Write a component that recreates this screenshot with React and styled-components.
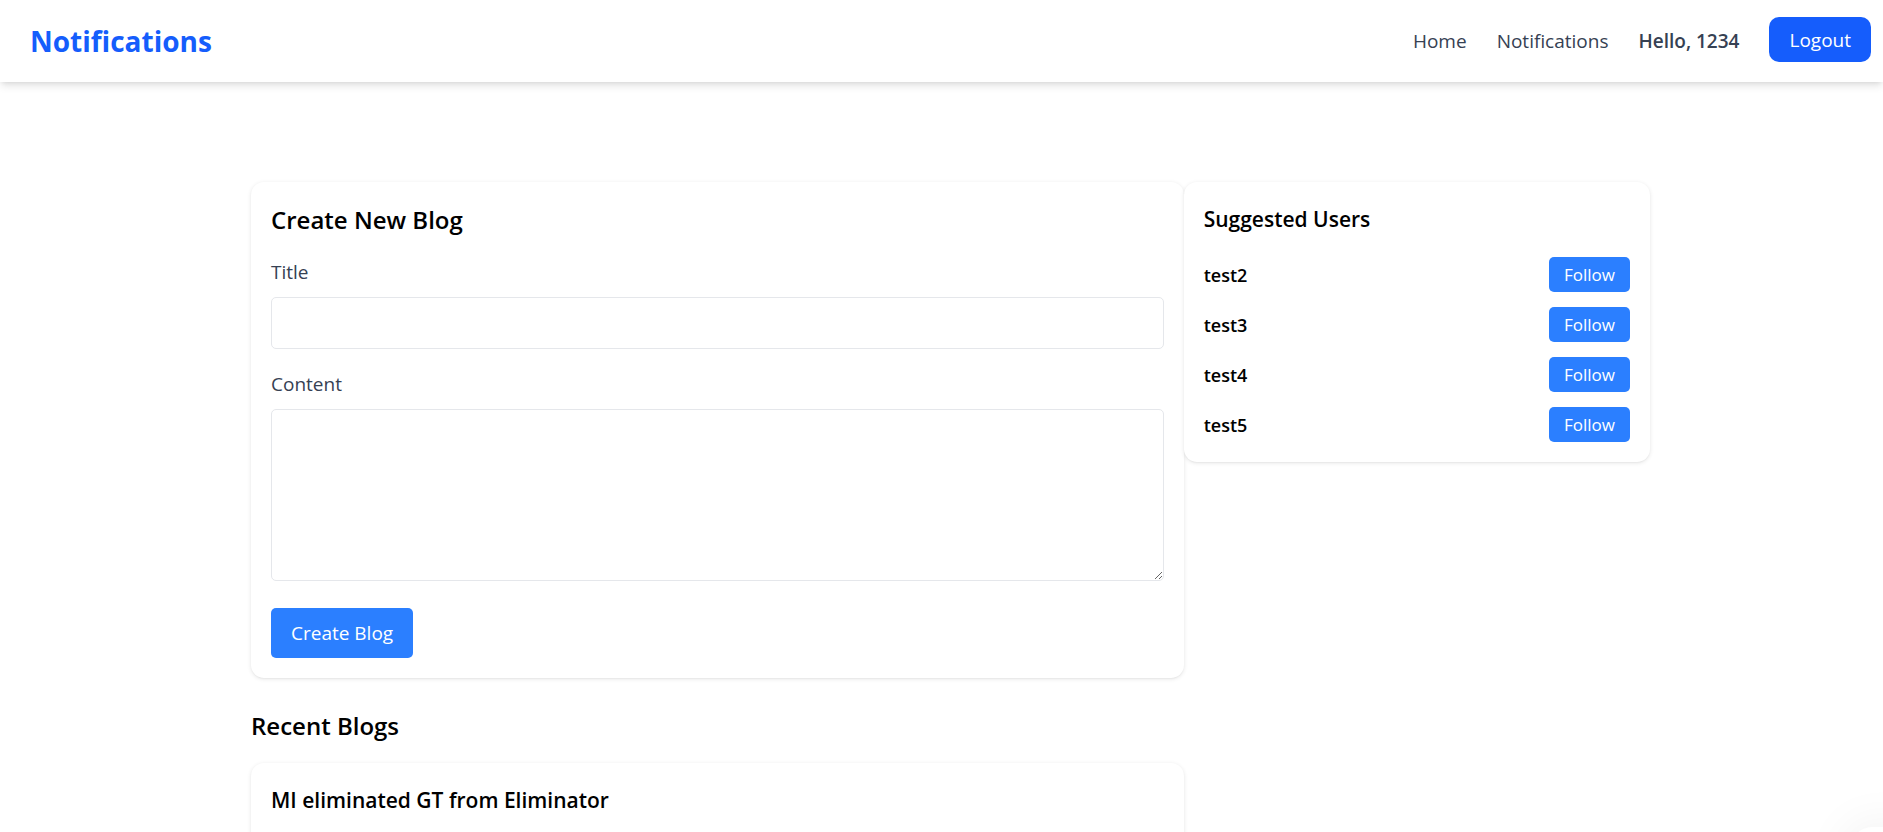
import React from "react";
import styled, { createGlobalStyle } from "styled-components";

const GlobalStyle = createGlobalStyle`
  *, *::before, *::after { box-sizing: border-box; margin: 0; }
  html { scrollbar-width: none; }
  body {
    background: #fff;
    color: #000;
    font-family: "Segoe UI", "Open Sans", "Noto Sans", sans-serif;
    font-size: 19px;
    line-height: 30px;
  }
  button, input, textarea { font: inherit; }
`;

const Header = styled.header`
  position: relative;
  display: flex;
  align-items: center;
  justify-content: space-between;
  height: 82px;
  padding: 0 12px 0 30px;
  background: #fff;
  box-shadow: 0 5px 8px -1px rgba(0, 0, 0, 0.1), 0 2px 5px -2px rgba(0, 0, 0, 0.1);
`;

const Brand = styled.a`
  color: #155dfc;
  font-size: 28px;
  font-weight: 700;
  line-height: 40px;
  text-decoration: none;
`;

const Nav = styled.nav`
  display: flex;
  align-items: center;
  gap: 30px;
  color: #364153;
`;

const NavLink = styled.a`
  color: inherit;
  text-decoration: none;
`;

const Greeting = styled.span`
  font-weight: 600;
`;

const Button = styled.button`
  display: block;
  flex: none;
  border: 0;
  border-radius: 5px;
  padding: 10px 20px;
  background: #2b7fff;
  color: #fff;
  cursor: pointer;
`;

const LogoutButton = styled(Button)`
  margin-bottom: 4px;
  border-radius: 10px;
  padding: 8px 20px 7px;
  background: #155dfc;
`;

const FollowButton = styled(Button)`
  padding: 5px 15px;
  font-size: 17px;
  line-height: 25px;
`;

const PageWrap = styled.div`
  padding: 100px 0 40px 18px;
`;

const Page = styled.main`
  display: grid;
  grid-template-columns: 2fr 1fr;
  align-items: start;
  width: 100%;
  max-width: 1399px;
  margin: 0 auto;
`;

const Feed = styled.div`
  display: flex;
  flex-direction: column;
  gap: 30px;
  min-width: 0;
`;

const Card = styled.section`
  padding: 20px;
  border-radius: 13px;
  background: #fff;
  box-shadow: 0 1px 4px rgba(0, 0, 0, 0.1), 0 1px 2px -1px rgba(0, 0, 0, 0.1);
`;

const Heading = styled.h2`
  margin-bottom: 20px;
  font-size: ${({ $small }) => ($small ? "21px" : "24px")};
  font-weight: 600;
  line-height: 35px;
`;

const Field = styled.div`
  margin-bottom: ${({ $last }) => ($last ? "27px" : "20px")};
`;

const Label = styled.label`
  display: block;
  margin-bottom: 10px;
  color: #364153;
`;

const TextInput = styled.input`
  display: block;
  width: 100%;
  height: 52px;
  padding: 10px;
  border: 1px solid #e5e7eb;
  border-radius: 5px;
  background: #fff;
`;

const TextArea = styled(TextInput)`
  height: 172px;
  resize: vertical;
`;

const UserList = styled.ul`
  display: flex;
  flex-direction: column;
  gap: 15px;
  padding: 0;
  list-style: none;
`;

const UserRow = styled.li`
  display: flex;
  align-items: center;
  justify-content: space-between;
`;

const UserName = styled.span`
  font-size: 18px;
  font-weight: 600;
`;

const ChatLauncher = styled.button`
  position: fixed;
  right: -35px;
  bottom: -65px;
  width: 70px;
  height: 70px;
  border: 0;
  border-radius: 25px;
  background: #fff;
  box-shadow: 0 0 50px rgba(0, 0, 0, 0.07);
`;

const users = ["test2", "test3", "test4", "test5"];
const blogs = ["MI eliminated GT from Eliminator"];

export default function App() {
  return (
    <>
      <GlobalStyle />
      <Header>
        <Brand href="#">Notifications</Brand>
        <Nav>
          <NavLink href="#home">Home</NavLink>
          <NavLink href="#notifications">Notifications</NavLink>
          <Greeting>Hello, 1234</Greeting>
          <LogoutButton type="button">Logout</LogoutButton>
        </Nav>
      </Header>
      <PageWrap>
        <Page>
          <Feed>
            <Card as="form" onSubmit={(event) => event.preventDefault()}>
              <Heading>Create New Blog</Heading>
              <Field>
                <Label htmlFor="title">Title</Label>
                <TextInput id="title" type="text" />
              </Field>
              <Field $last>
                <Label htmlFor="content">Content</Label>
                <TextArea as="textarea" id="content" />
              </Field>
              <Button type="submit">Create Blog</Button>
            </Card>
            <section>
              <Heading>Recent Blogs</Heading>
              {blogs.map((title) => (
                <Card as="article" key={title}>
                  <Heading as="h3" $small>{title}</Heading>
                </Card>
              ))}
            </section>
          </Feed>
          <Card as="aside">
            <Heading $small>Suggested Users</Heading>
            <UserList>
              {users.map((name) => (
                <UserRow key={name}>
                  <UserName>{name}</UserName>
                  <FollowButton type="button">Follow</FollowButton>
                </UserRow>
              ))}
            </UserList>
          </Card>
        </Page>
      </PageWrap>
      <ChatLauncher type="button" />
    </>
  );
}
